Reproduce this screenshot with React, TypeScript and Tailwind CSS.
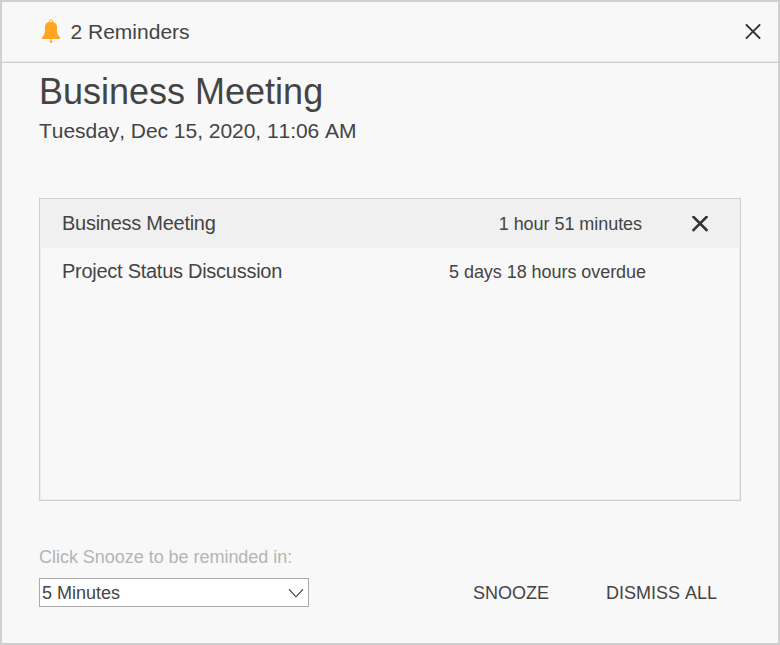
import React from "react";

const reminders = [
  { title: "Business Meeting", due: "1 hour 51 minutes", active: true },
  { title: "Project Status Discussion", due: "5 days 18 hours overdue", active: false },
];

function Bell() {
  return (
    <svg width="20" height="26" viewBox="0 0 20 26" className="mb-[2px] shrink-0">
      <path d="M8.4 4.6V3.4Q8.4 1.7 10 1.7T11.6 3.4V4.6" fill="none" stroke="#ffa51f" strokeWidth="1" />
      <path
        d="M8 4H12C14.8 4.6 15.9 6.4 16 9V12.5C16.1 15.5 17 17.5 19 19.6V21H1V19.6C3 17.5 3.9 15.5 4 12.5V9C4.1 6.4 5.2 4.6 8 4Z"
        fill="#ffa51f"
      />
      <path d="M10 21V25" stroke="#ffa51f" strokeWidth="1" />
      <ellipse cx="10" cy="23.6" rx="1.2" ry="1.2" fill="#ffa51f" />
    </svg>
  );
}

function Cross({ weight }: { weight: number }) {
  return (
    <svg width="16" height="16" viewBox="0 0 16 16" className="block">
      <path d="M1.5 1L14.5 14M14.5 1L1.5 14" stroke="#333" strokeWidth={weight} strokeLinecap="square" />
    </svg>
  );
}

export default function App() {
  return (
    <div className="flex h-[645px] w-[780px] flex-col border-2 border-[#d0d0d0] bg-[#f8f8f8] font-['Liberation_Sans',Arial,sans-serif] text-[#444] [font-kerning:none]">
      <header className="flex h-[61px] items-center border-b border-[#d0d0d0] pr-[17px] pl-[39px] shadow-[inset_0_-1px_0_#e6e6e6]">
        <Bell />
        <h1 className="ml-[9.5px] text-[21px] leading-6">2 Reminders</h1>
        <button className="ml-auto" aria-label="Close">
          <Cross weight={1.8} />
        </button>
      </header>
      <main className="flex flex-1 flex-col px-[37px]">
        <h2 className="mt-2 h-[42px] text-[36px] leading-[42px] whitespace-nowrap">Business Meeting</h2>
        <p className="mt-[6px] h-6 text-[21px] leading-6 tracking-[-0.04px] whitespace-nowrap">Tuesday, Dec 15, 2020, 11:06 AM</p>
        <ul className="mt-[55px] h-[303px] w-[702px] border border-[#d0d0d0] shadow-[inset_0_0_0_1px_#ececec]">
          {reminders.map((r) => (
            <li
              key={r.title}
              className={
                r.active
                  ? "flex h-[49px] items-center bg-[#f0f0f0] pr-[32px] pl-[22px]"
                  : "flex h-[47px] items-center pr-[94px] pl-[22px]"
              }
            >
              <span className="pb-[2px] text-[20px] leading-6 tracking-[-0.27px]">{r.title}</span>
              <span className="ml-auto text-[18px] leading-6 tracking-[-0.05px]">{r.due}</span>
              {r.active && (
                <button className="mr-[0.5px] ml-[49.5px]" aria-label="Dismiss">
                  <Cross weight={2.6} />
                </button>
              )}
            </li>
          ))}
        </ul>
        <p className="mt-[44px] h-6 text-[18px] leading-6 tracking-[-0.03px] text-[#b4b4b4]">Click Snooze to be reminded in:</p>
        <div className="mt-[9px] flex items-center">
          <div className="flex h-[29px] w-[270px] items-center justify-between border border-[#ababab] bg-white pr-[4px] pl-[2px]">
            <span className="text-[18px] leading-6">5 Minutes</span>
            <svg width="16" height="10" viewBox="0 0 16 10">
              <path d="M1 1.4L8 8.8L15 1.4" fill="none" stroke="#333" strokeWidth="1.1" />
            </svg>
          </div>
          <button className="ml-[164px] text-[18px] leading-6">SNOOZE</button>
          <button className="ml-[57px] text-[18px] leading-6">DISMISS ALL</button>
        </div>
      </main>
    </div>
  );
}
